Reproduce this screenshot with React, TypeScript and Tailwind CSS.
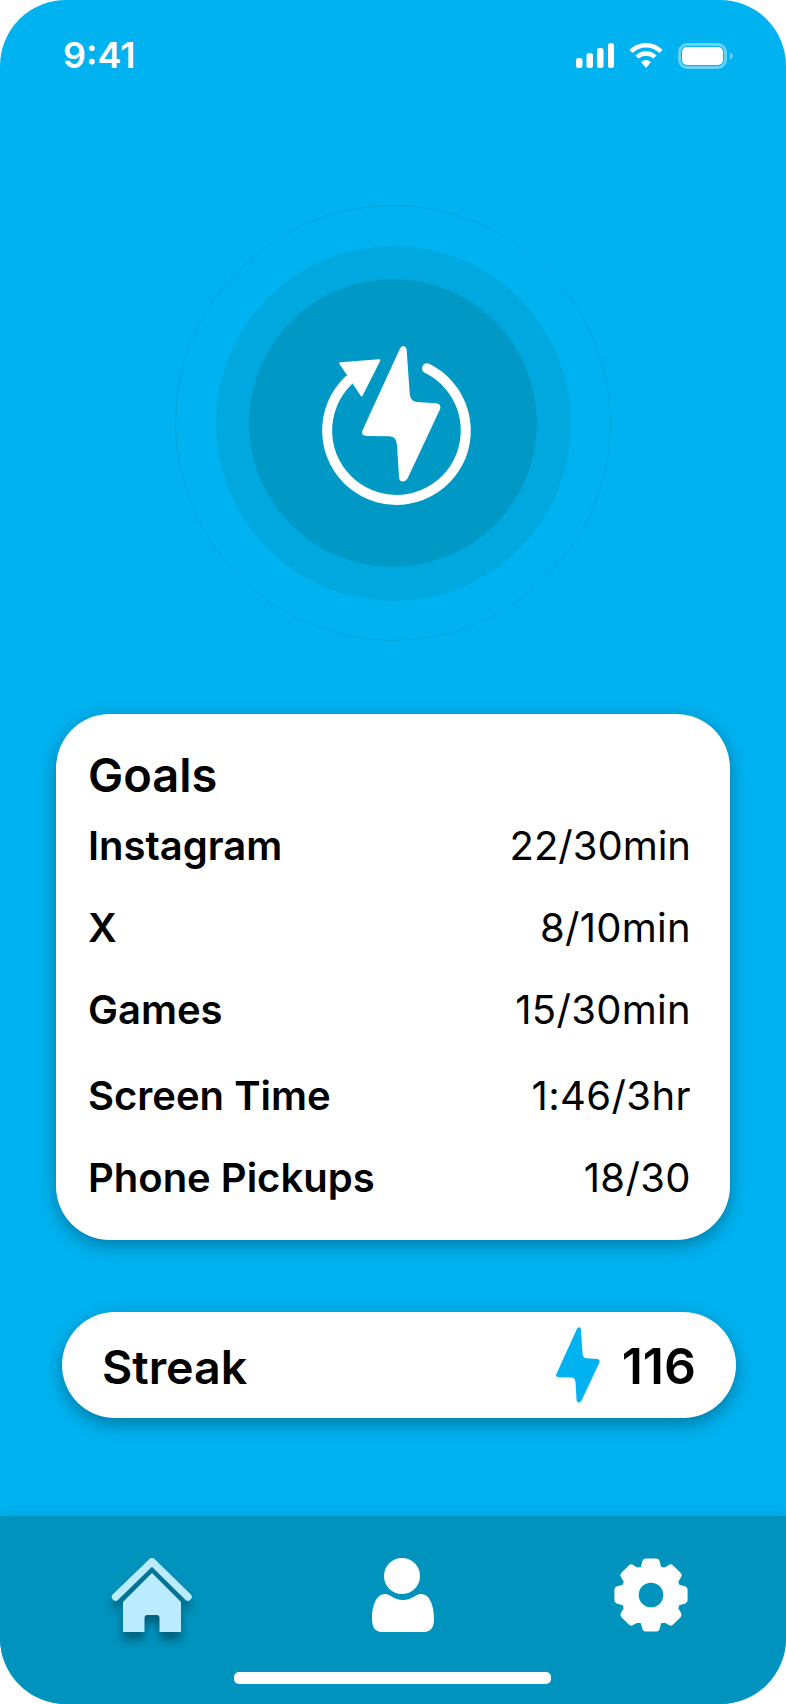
const boltPath =
  "M325 60 Q330 48 338 48 Q346 50 347 60 L356 190 Q358 215 378 216 L436 220 Q452 222 447 238 L350 445 Q343 456 333 454 Q324 452 324 440 L318 345 Q316 320 296 319 L225 318 Q208 316 215 300 Z";

const gearPath = Array.from({ length: 8 }, (_, i) => {
  const t = (i * 45 - 90) * (Math.PI / 180);
  const p = (r: number, d: number) => {
    const a = t + (d * Math.PI) / 180;
    return `${(37 + r * Math.cos(a)).toFixed(2)} ${(37 + r * Math.sin(a)).toFixed(2)}`;
  };
  return `${i === 0 ? "M" : "L"}${p(27, -15)} L${p(33.5, -9)} L${p(33.5, 9)} L${p(27, 15)}`;
}).join(" ") + " Z";

const rows = [
  { name: "Instagram", value: "22/30min", gap: "mt-[19px]", track: "" },
  { name: "X", value: "8/10min", gap: "mt-[34px]", track: "tracking-[0.3px]" },
  { name: "Games", value: "15/30min", gap: "mt-[34px]", track: "tracking-[0.3px]" },
  { name: "Screen Time", value: "1:46/3hr", gap: "mt-[38px]", track: "tracking-[0.4px]" },
  { name: "Phone Pickups", value: "18/30", gap: "mt-[34px]", track: "tracking-[0.4px]" },
];

export default function App() {
  return (
    <div className="w-[786px] h-[1704px] bg-white font-['Inter',sans-serif] text-black">
      <div className="w-full h-full rounded-[66px] bg-[#00b2f0] overflow-hidden flex flex-col">
        {/* status bar */}
        <div className="flex items-center h-[25px] mt-[43px] pl-[63px] pr-[53px] shrink-0">
          <span className="text-[36px] leading-[25px] font-semibold text-white">9:41</span>
          <div className="ml-auto flex items-center">
            <svg width="38" height="25" viewBox="0 0 38 25" fill="white">
              <rect x="0" y="15" width="6.5" height="10" rx="2.5" />
              <rect x="10.5" y="10" width="6.5" height="15" rx="2.5" />
              <rect x="21" y="5" width="6.5" height="20" rx="2.5" />
              <rect x="32" y="0" width="6" height="25" rx="2.5" />
            </svg>
            <svg className="ml-[15px]" width="34" height="25" viewBox="0 0 34 25" fill="none">
              <path d="M2 8.5A21 21 0 0 1 32 8.5" stroke="white" strokeWidth="4.5" />
              <path d="M8 14A13 13 0 0 1 26 14" stroke="white" strokeWidth="4.5" />
              <path d="M12 19A8 8 0 0 1 22 19L17 25Z" fill="white" />
            </svg>
            <svg className="ml-[15px]" width="55" height="26" viewBox="0 0 55 26" fill="none">
              <rect x="1.5" y="1.5" width="46" height="23" rx="7.5" stroke="#66d2f7" strokeWidth="3" />
              <rect x="4" y="4" width="41" height="18" rx="5" fill="white" />
              <path d="M52 9.5C54 10.5 55 12 55 13S54 15.5 52 16.5Z" fill="#66d2f7" />
            </svg>
          </div>
        </div>

        {/* rings */}
        <div className="mt-[137px] ml-[175px] w-[436px] h-[436px] shrink-0 rounded-full border border-[#00a3da] flex items-center justify-center">
          <div className="w-[355px] h-[355px] rounded-full bg-[#00a8e0] flex items-center justify-center">
            <div className="w-[288px] h-[288px] rounded-full bg-[#0099c6] flex items-center justify-center">
              <svg width="200" height="200" viewBox="6 -21 600 600" fill="none">
                <path d="M408 115A208 208 0 1 1 172 152" stroke="white" strokeWidth="30" strokeLinecap="round" />
                <path d="M148 100L265 91L212 196Z" fill="white" stroke="white" strokeWidth="6" strokeLinejoin="round" />
                <path d={boltPath} fill="white" />
              </svg>
            </div>
          </div>
        </div>

        {/* goals card */}
        <div className="mt-[73px] ml-[56px] w-[674px] h-[526px] shrink-0 rounded-[54px] bg-white pt-[32px] pl-[32px] pr-[39px] shadow-[0_5px_18px_rgba(0,0,0,0.32)]">
          <div className="text-[47px] leading-[57px] font-semibold">Goals</div>
          {rows.map((r) => (
            <div key={r.name} className={`flex justify-between text-[40px] leading-[48px] ${r.gap}`}>
              <span className="font-semibold">{r.name}</span>
              <span className={`font-normal ${r.track}`}>{r.value}</span>
            </div>
          ))}
        </div>

        {/* streak pill */}
        <div className="mt-[72px] ml-[62px] w-[674px] h-[106px] shrink-0 rounded-[53px] bg-white flex items-center pl-[40px] pr-[40px] shadow-[0_6px_18px_rgba(0,0,0,0.32)]">
          <span className="pt-[3px] text-[46.5px] leading-[56px] font-semibold">Streak</span>
          <svg className="ml-auto" width="44" height="76" viewBox="213 48 237 408">
            <path d={boltPath} fill="#00b2f0" />
          </svg>
          <span className="ml-[22px] pt-[2px] text-[50px] leading-[56px] font-semibold">116</span>
        </div>

        {/* bottom nav */}
        <div className="mt-auto h-[188px] shrink-0 bg-[#0093be] pt-[42px] shadow-[0_-4px_10px_rgba(0,0,0,0.06)]">
          <div className="flex justify-between items-start pl-[111px] pr-[98px]">
            <svg className="drop-shadow-[0_8px_5px_rgba(0,0,0,0.35)]" width="82" height="74" viewBox="111 1558 82 74" fill="none">
              <path d="M115.5 1597L152 1561.7L188 1597" stroke="#bbebff" strokeWidth="7.4" strokeLinecap="round" strokeLinejoin="round" />
              <path d="M152 1573L181 1602V1632H159.5V1618Q159.5 1615 156.5 1615H147.5Q144.5 1615 144.5 1618V1632H123V1602Z" fill="#bbebff" />
            </svg>
            <svg className="-translate-x-[1px]" width="62" height="74" viewBox="372 1558 62 74" fill="white">
              <circle cx="402" cy="1576" r="18" />
              <path d="M372 1619C372 1606 376 1594 385 1594C391 1594 393 1600 403 1600C413 1600 415 1594 421 1594C430 1594 434 1606 434 1619C434 1627 431 1632 424 1632L382 1632C375 1632 372 1627 372 1619Z" />
            </svg>
            <svg width="74" height="74" viewBox="0 0 74 74">
              <path d={gearPath} fill="white" stroke="white" strokeWidth="7" strokeLinejoin="round" />
              <circle cx="37" cy="37" r="12.3" fill="#0093be" />
            </svg>
          </div>
          <div className="mt-[40px] ml-[234px] w-[317px] h-[12px] rounded-[5px] bg-white" />
        </div>
      </div>
    </div>
  );
}
